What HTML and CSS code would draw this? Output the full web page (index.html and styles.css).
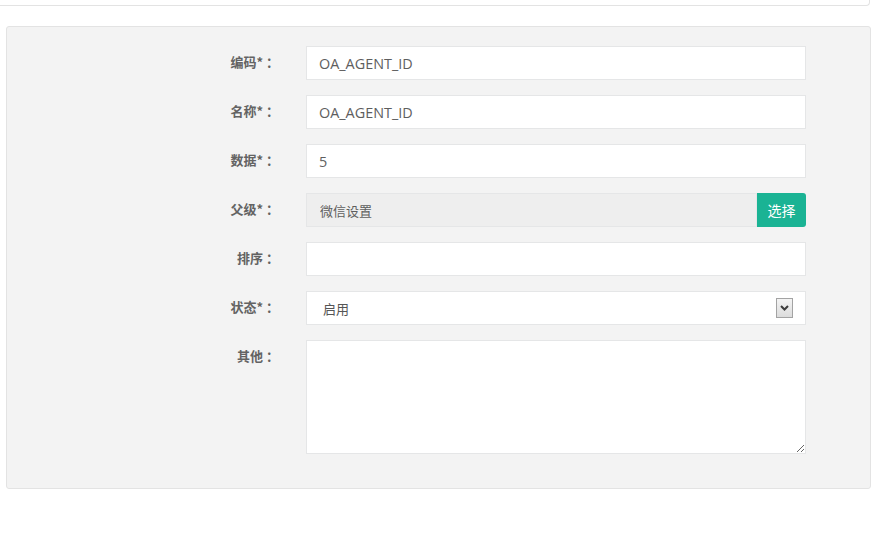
FILE: index.html
```html
<!DOCTYPE html>
<html lang="zh">
<head>
<meta charset="utf-8">
<title>表单</title>
<link rel="stylesheet" href="styles.css">
</head>
<body>
<div class="top-card"></div>
<div class="panel">
  <form class="form">
    <div class="row">
      <label class="label">编码*<span class="colon">：</span></label>
      <div class="field"><input class="input" type="text" value="OA_AGENT_ID"></div>
    </div>
    <div class="row">
      <label class="label">名称*<span class="colon">：</span></label>
      <div class="field"><input class="input" type="text" value="OA_AGENT_ID"></div>
    </div>
    <div class="row">
      <label class="label">数据*<span class="colon">：</span></label>
      <div class="field"><input class="input" type="text" value="5"></div>
    </div>
    <div class="row">
      <label class="label">父级*<span class="colon">：</span></label>
      <div class="field group">
        <input class="input readonly" type="text" value="微信设置" readonly>
        <button type="button" class="btn">选择</button>
      </div>
    </div>
    <div class="row">
      <label class="label">排序<span class="colon">：</span></label>
      <div class="field"><input class="input" type="text" value=""></div>
    </div>
    <div class="row">
      <label class="label">状态*<span class="colon">：</span></label>
      <div class="field">
        <div class="select-wrap">
          <select class="select"><option>启用</option><option>禁用</option></select>
          <span class="arrow"><svg width="9" height="6" viewBox="0 0 9 6"><path d="M1 1 L4.5 4.5 L8 1" fill="none" stroke="#3c3c3c" stroke-width="2"/></svg></span>
        </div>
      </div>
    </div>
    <div class="row last">
      <label class="label">其他<span class="colon">：</span></label>
      <div class="field"><textarea class="textarea"></textarea></div>
    </div>
  </form>
</div>
</body>
</html>
```
FILE: styles.css
```css
html, body {
  margin: 0;
  padding: 0;
  background: #fff;
  font-family: "Open Sans", "Noto Sans CJK SC", sans-serif;
  color: #676a6c;
}
.top-card {
  width: 869px;
  height: 5px;
  border-right: 1px solid #e3e3e3;
  border-bottom: 1px solid #e3e3e3;
  border-bottom-right-radius: 4px;
}
.panel {
  margin: 20px 0 0 6px;
  width: 863px;
  background: #f3f3f3;
  border: 1px solid #e3e3e3;
  border-radius: 3px;
  padding: 19px 0 34px;
}
.form {
  display: flex;
  flex-direction: column;
  gap: 15px;
}
.row {
  display: flex;
  align-items: flex-start;
}
.label {
  width: 269px;
  text-align: right;
  font-family: "Noto Sans CJK SC", sans-serif;
  font-weight: bold;
  font-size: 13px;
  color: #636363;
  line-height: 18px;
  padding-top: 7px;
}
.colon {
  display: inline-block;
  width: 10px;
  padding-left: 3px;
  text-align: left;
}
.field {
  margin-left: 30px;
  width: 500px;
}
.group {
  display: flex;
}
.input {
  box-sizing: border-box;
  width: 100%;
  height: 34px;
  border: 1px solid #e5e6e7;
  background: #fff;
  padding: 0 12px;
  font-family: "Open Sans", "Noto Sans CJK SC", sans-serif;
  font-size: 14.4px;
  color: #5e5e5e;
  outline: none;
  margin: 0;
}
.readonly {
  background: #eeeeee;
  flex: 1;
  font-size: 13px;
  padding-left: 13px;
}
.btn {
  width: 49px;
  height: 34px;
  flex: none;
  border: none;
  margin: 0;
  background: #1ab394;
  color: #fff;
  font-family: "Noto Sans CJK SC", sans-serif;
  font-size: 14px;
  border-radius: 0 3px 3px 0;
  padding: 0;
}
.select-wrap {
  position: relative;
}
.select {
  box-sizing: border-box;
  width: 100%;
  height: 34px;
  border: 1px solid #e5e6e7;
  background: #fff;
  padding: 0 16px;
  font-family: "Noto Sans CJK SC", sans-serif;
  font-size: 13px;
  color: #555;
  appearance: none;
  -webkit-appearance: none;
  outline: none;
  margin: 0;
}
.arrow {
  position: absolute;
  right: 13px;
  top: 7px;
  width: 15px;
  height: 18px;
  border: 1px solid #a3a3a3;
  background: linear-gradient(#f4f4f4, #dcdcdc);
  display: flex;
  align-items: center;
  justify-content: center;
  pointer-events: none;
}
.textarea {
  box-sizing: border-box;
  display: block;
  width: 100%;
  height: 114px;
  border: 1px solid #e5e6e7;
  background: #fff;
  margin: 0;
  resize: vertical;
  outline: none;
}
```
